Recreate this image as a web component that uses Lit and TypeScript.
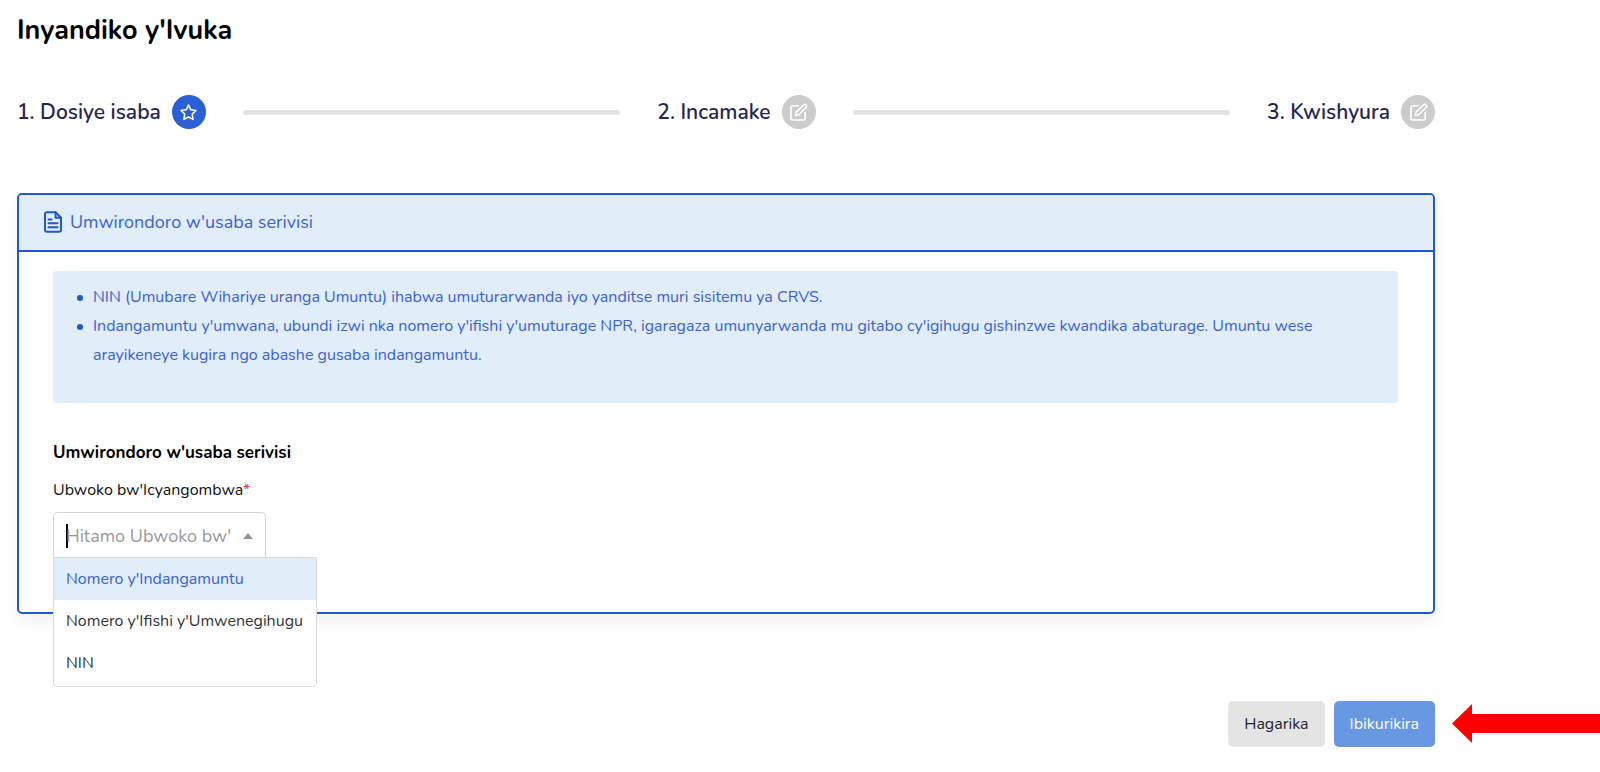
import { LitElement, html, css, svg } from "lit";
import { customElement, state } from "lit/decorators.js";

const starIcon = svg`<path d="M12 2.6l2.9 6 6.5.9-4.7 4.6 1.1 6.6L12 17.6l-5.8 3.1 1.1-6.6L2.6 9.5l6.5-.9z"/>`;
const editIcon = svg`<path d="M12 3.5H4.5a2 2 0 0 0-2 2v14a2 2 0 0 0 2 2h14a2 2 0 0 0 2-2V12"/><path d="M18.6 2.2a2.3 2.3 0 0 1 3.2 3.2L12.4 14.8l-4.2 1 1-4.2z"/>`;

@customElement("app-root")
export class AppRoot extends LitElement {
  static styles = css`
    :host {
      display: block;
      font-family: Nunito, Lato, sans-serif;
      font-size: 16px;
      color: #212529;
    }
    * { box-sizing: border-box; }
    .page {
      display: grid;
      grid-template-columns: minmax(0, 1fr) 148px;
      column-gap: 17px;
      padding: 14px 0 24px 17px;
    }
    .title {
      grid-column: 1;
      margin: 0 0 47px;
      font-size: 27px;
      line-height: 34px;
      font-weight: 700;
      color: #000;
    }
    .steps {
      grid-column: 1;
      display: flex;
      align-items: center;
      gap: 37px;
      margin: 0 0 64px;
    }
    .step {
      display: flex;
      align-items: center;
      gap: 11px;
      font-size: 21px;
      line-height: 32px;
      font-weight: 600;
      color: #26264f;
    }
    .bar { flex: 1; height: 5px; border-radius: 3px; background: #e4e4e4; }
    .badge {
      display: grid;
      place-items: center;
      width: 34px;
      height: 34px;
      border-radius: 50%;
      background: #ccc;
      color: #fff;
    }
    .badge.active { background: #2a5fd5; }
    .badge svg { width: 19px; height: 19px; }
    svg.line {
      fill: none;
      stroke: currentColor;
      stroke-width: 2;
      stroke-linecap: round;
      stroke-linejoin: round;
    }
    .card {
      grid-column: 1;
      border: 2px solid #1f58d0;
      border-radius: 5px;
      box-shadow: 0 8px 16px rgba(0, 0, 0, 0.05);
      background: #fff;
    }
    .card-head {
      display: flex;
      align-items: center;
      gap: 7px;
      margin: 0;
      padding: 13px 24px 14px;
      border-bottom: 2px solid #1f58d0;
      border-radius: 3px 3px 0 0;
      background: #e1edf9;
      font-size: 18px;
      line-height: 28px;
      font-weight: 400;
      color: #3b62d6;
    }
    .card-head svg { width: 20px; height: 22px; color: #1f58d0; }
    .card-body { padding: 19px 35px 54px 34px; }
    .info {
      padding: 12px 16px 33px;
      border-radius: 4px;
      background: #e1edf9;
      color: #3b62d6;
    }
    .info ul { margin: 0; padding-left: 24px; list-style: none; }
    .info li {
      position: relative;
      line-height: 29px;
    }
    .info li::before {
      content: "";
      position: absolute;
      left: -16px;
      top: 12px;
      width: 6px;
      height: 6px;
      border-radius: 50%;
      background: #1f58d0;
    }
    .section {
      margin: 38px 0 13px;
      font-size: 17px;
      line-height: 24px;
      font-weight: 700;
      color: #000;
    }
    .label { display: block; margin-bottom: 10px; line-height: 24px; color: #111; }
    .required { color: #f0284a; }
    .combo { position: relative; width: 213px; }
    .control {
      display: flex;
      align-items: center;
      height: 46px;
      padding: 0 12px;
      border: 1px solid #d3d3d3;
      border-bottom: 0;
      border-radius: 5px 5px 0 0;
    }
    .caret { width: 2px; height: 24px; margin-right: -2px; background: #000; }
    .input {
      flex: 1;
      min-width: 0;
      height: 28px;
      padding: 0;
      border: 0;
      outline: 0;
      background: none;
      font: inherit;
      font-size: 18px;
      color: #333;
    }
    .input::placeholder { color: #999; opacity: 1; }
    .arrow {
      border: 5px solid transparent;
      border-top: 0;
      border-bottom: 6px solid #999;
    }
    .menu {
      position: absolute;
      z-index: 2;
      top: 100%;
      left: 0;
      margin: -1px 0 0;
      padding: 0 0 2px;
      list-style: none;
      white-space: nowrap;
      border: 1px solid #d9dbde;
      border-radius: 0 0 4px 4px;
      background: #fff;
      overflow: hidden;
      width: 264px;
    }
    .option { padding: 9px 12px; line-height: 24px; color: #333; }
    .option.marked { background: #e1edf9; color: #3b62d6; }
    .actions {
      grid-column: 1;
      display: flex;
      justify-content: flex-end;
      gap: 9px;
      margin-top: 87px;
    }
    .btn {
      height: 46px;
      padding: 0 16px;
      border: 0;
      border-radius: 5px;
      font: inherit;
      background: #e4e4e4;
      color: #212529;
    }
    .btn.primary { background: #6898e2; color: #fff; }
    .pointer { display: flex; align-items: center; height: 39px; align-self: end; margin-bottom: 4px; }
    .head { width: 20px; height: 39px; fill: #f00; }
    .shaft { flex: 1; height: 19px; background: #f00; }
  `;

  @state() private marked = 0;

  private steps = [
    { label: "1. Dosiye isaba", active: true },
    { label: "2. Incamake", active: false },
    { label: "3. Kwishyura", active: false },
  ];

  private options = ["Nomero y'Indangamuntu", "Nomero y'Ifishi y'Umwenegihugu", "NIN"];

  render() {
    return html`
      <main class="page">
        <h1 class="title">Inyandiko y'Ivuka</h1>
        <div class="steps">
          ${this.steps.map(
            (s, i) => html`
              ${i ? html`<span class="bar"></span>` : ""}
              <div class="step">
                <span>${s.label}</span>
                <span class="badge ${s.active ? "active" : ""}">
                  <svg class="line" viewBox="0 0 24 24" aria-hidden="true">${s.active ? starIcon : editIcon}</svg>
                </span>
              </div>
            `
          )}
        </div>

        <section class="card">
          <h2 class="card-head">
            <svg class="line" viewBox="0 0 20 22" aria-hidden="true">
              <path d="M12.5 1.2H4a2 2 0 0 0-2 2v15.6a2 2 0 0 0 2 2h12a2 2 0 0 0 2-2V6.7z" />
              <path d="M12.5 1.2v5.5H18M5.5 8.5h3M5.5 12.3h9M5.5 16.2h9" />
            </svg>
            <span>Umwirondoro w'usaba serivisi</span>
          </h2>
          <div class="card-body">
            <div class="info">
              <ul>
                <li>NIN (Umubare Wihariye uranga Umuntu) ihabwa umuturarwanda iyo yanditse muri sisitemu ya CRVS.</li>
                <li>Indangamuntu y'umwana, ubundi izwi nka nomero y'ifishi y'umuturage NPR, igaragaza umunyarwanda mu gitabo cy'igihugu gishinzwe kwandika abaturage. Umuntu wese arayikeneye kugira ngo abashe gusaba indangamuntu.</li>
              </ul>
            </div>
            <h3 class="section">Umwirondoro w'usaba serivisi</h3>
            <label class="label" for="doc-type">Ubwoko bw'Icyangombwa<span class="required">*</span></label>
            <div class="combo">
              <div class="control">
                <span class="caret"></span>
                <input class="input" id="doc-type" type="text" role="combobox" aria-expanded="true"
                  aria-controls="doc-list" autocomplete="off" placeholder="Hitamo Ubwoko bw'" />
                <span class="arrow"></span>
              </div>
              <ul class="menu" id="doc-list" role="listbox">
                ${this.options.map(
                  (o, i) => html`<li class="option ${i === this.marked ? "marked" : ""}" role="option"
                    aria-selected=${i === this.marked} @mouseenter=${() => (this.marked = i)}>${o}</li>`
                )}
              </ul>
            </div>
          </div>
        </section>

        <div class="actions">
          <button class="btn" type="button">Hagarika</button>
          <button class="btn primary" type="button">Ibikurikira</button>
        </div>
        <div class="pointer" aria-hidden="true">
          <svg class="head" viewBox="0 0 20 39"><path d="M0 19.5L20 0v39z" /></svg>
          <span class="shaft"></span>
        </div>
      </main>
    `;
  }
}
